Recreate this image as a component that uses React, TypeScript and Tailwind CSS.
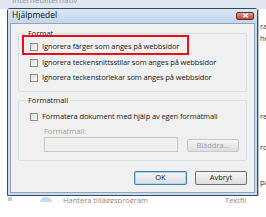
import React from "react";

const font = { fontFamily: '"Open Sans", "Noto Sans", "DejaVu Sans", sans-serif' };

function Check({ label, disabled }: { label: string; disabled?: boolean }) {
  return (
    <div className="flex items-center gap-[4px] h-[14px]">
      <div className="w-[8px] h-[8px] border border-[#8f8f8f] bg-gradient-to-br from-[#dcdcdc] to-[#fafafa] shrink-0" />
      <span className={(disabled ? "text-[#a0a0a0]" : "text-[#1a1a1a]") + " tracking-[-0.12px]"}>{label}</span>
    </div>
  );
}

function Button({ children, focused, disabled }: { children: React.ReactNode; focused?: boolean; disabled?: boolean }) {
  return (
    <div
      className={
        "flex items-center justify-center rounded-[2px] border bg-gradient-to-b from-[#f6f6f6] to-[#dddddd] " +
        (focused ? "border-[#3c7fb1] shadow-[inset_0_0_0_1px_#a7d8f3] " : disabled ? "border-[#c8c8c8] " : "border-[#707070] ") +
        (disabled ? "text-[#a0a0a0]" : "text-[#1a1a1a]")
      }
    >
      {children}
    </div>
  );
}

export default function App() {
  return (
    <div className="relative w-[266px] h-[217px] overflow-hidden bg-white text-[7.5px] leading-none" style={font}>
      {/* background window */}
      <div className="absolute left-0 top-0 w-[266px] h-[9px] bg-[#dfe6ee] overflow-hidden">
        <span className="absolute left-[12px] top-[-4px] text-[8px] text-[#8a96a4]">Internetalternativ</span>
      </div>
      <div className="absolute left-[258px] top-[9px] w-[8px] h-[190px] bg-white border-l border-[#b8c4d0] overflow-hidden">
        <div className="absolute left-[1px] top-[14px] text-[#333]">ral</div>
        <div className="absolute left-[1px] top-[26px] text-[#333]">hel</div>
        <div className="absolute left-[1px] top-[104px] text-[#333]">re</div>
        <div className="absolute left-[1px] top-[135px] text-[#333]">rc</div>
        <div className="absolute left-[1px] top-[170px] text-[#333]">pa</div>
      </div>
      <div className="absolute left-0 top-[196px] w-[266px] h-[7px] bg-white overflow-hidden">
        <div className="absolute left-[8px] top-[1px] w-[4px] h-[4px] bg-[#c8c8c8]" />
        <div className="absolute left-[40px] top-[1px] w-[12px] h-[5px] rounded-t-full bg-[#c4dcf0]" />
        <span className="absolute left-[63px] top-[1px] text-[#8a8a8a]">Hantera tilläggsprogram</span>
        <span className="absolute left-[225px] top-[1px] text-[#8a8a8a]">Textfil</span>
      </div>

      {/* dialog */}
      <div className="absolute left-[7px] top-[8px] w-[251px] h-[188px] border border-[#3a4a5c] bg-[#c9dbee] flex flex-col rounded-t-[3px]">
        <div className="h-[13px] flex items-center justify-between pl-[4px] pr-[3px] bg-gradient-to-b from-[#dbe7f4] to-[#c4d7ec]">
          <span className="text-[#111] text-[8.5px]">Hjälpmedel</span>
          <div className="w-[18px] h-[8px] rounded-[2px] border border-[#6d2a2a] bg-gradient-to-b from-[#e59a8e] to-[#c5432f] flex items-center justify-center">
            <svg width="7" height="5" viewBox="0 0 7 5">
              <path d="M1 0.5 L6 4.5 M6 0.5 L1 4.5" stroke="white" strokeWidth="1.4" />
            </svg>
          </div>
        </div>
        <div className="flex-1 mx-[2px] mb-[2px] mt-[1px] bg-[#f0f0f0] border border-[#8ea4bd] flex flex-col px-[7px] pt-[6px]">
          <fieldset className="border border-[#d5dfe5] rounded-[2px] px-[5px] pb-[6px] h-[62px]">
            <legend className="px-[2px] ml-[2px] text-[#1a1a1a]">Format</legend>
            <div className="flex flex-col gap-[1px] mt-[2px]">
              <div className="relative">
                <div className="absolute left-[-2px] top-[-5px] w-[167px] h-[20px] border-2 border-[#e8111b]" />
                <div className="pl-[6px]">
                  <Check label="Ignorera färger som anges på webbsidor" />
                </div>
              </div>
              <div className="pl-[6px] mt-[1px]">
                <Check label="Ignorera teckensnittsstilar som anges på webbsidor" />
              </div>
              <div className="pl-[6px]">
                <Check label="Ignorera teckenstorlekar som anges på webbsidor" />
              </div>
            </div>
          </fieldset>
          <fieldset className="mt-[5px] border border-[#d5dfe5] rounded-[2px] px-[5px] h-[64px]">
            <legend className="px-[2px] ml-[2px] text-[#1a1a1a]">Formatmall</legend>
            <div className="pl-[6px] mt-[5px]">
              <Check label="Formatera dokument med hjälp av egen formatmall" />
            </div>
            <div className="pl-[20px] mt-[4px] text-[#a0a0a0]">Formatmall:</div>
            <div className="flex items-end gap-[9px] pl-[20px] mt-[2px]">
              <div className="w-[134px] h-[15px] border border-[#c8c8c8] bg-[#f0f0f0]" />
              <div className="w-[52px] h-[13px]">
                <Button disabled>
                  <span className="h-[11px] flex items-center">Bläddra...</span>
                </Button>
              </div>
            </div>
          </fieldset>
          <div className="flex justify-end gap-[8px] mt-[10px]">
            <div className="w-[53px] h-[14px]">
              <Button focused>
                <span className="h-[12px] flex items-center">OK</span>
              </Button>
            </div>
            <div className="w-[52px] h-[14px]">
              <Button>
                <span className="h-[12px] flex items-center">Avbryt</span>
              </Button>
            </div>
          </div>
        </div>
      </div>
    </div>
  );
}
